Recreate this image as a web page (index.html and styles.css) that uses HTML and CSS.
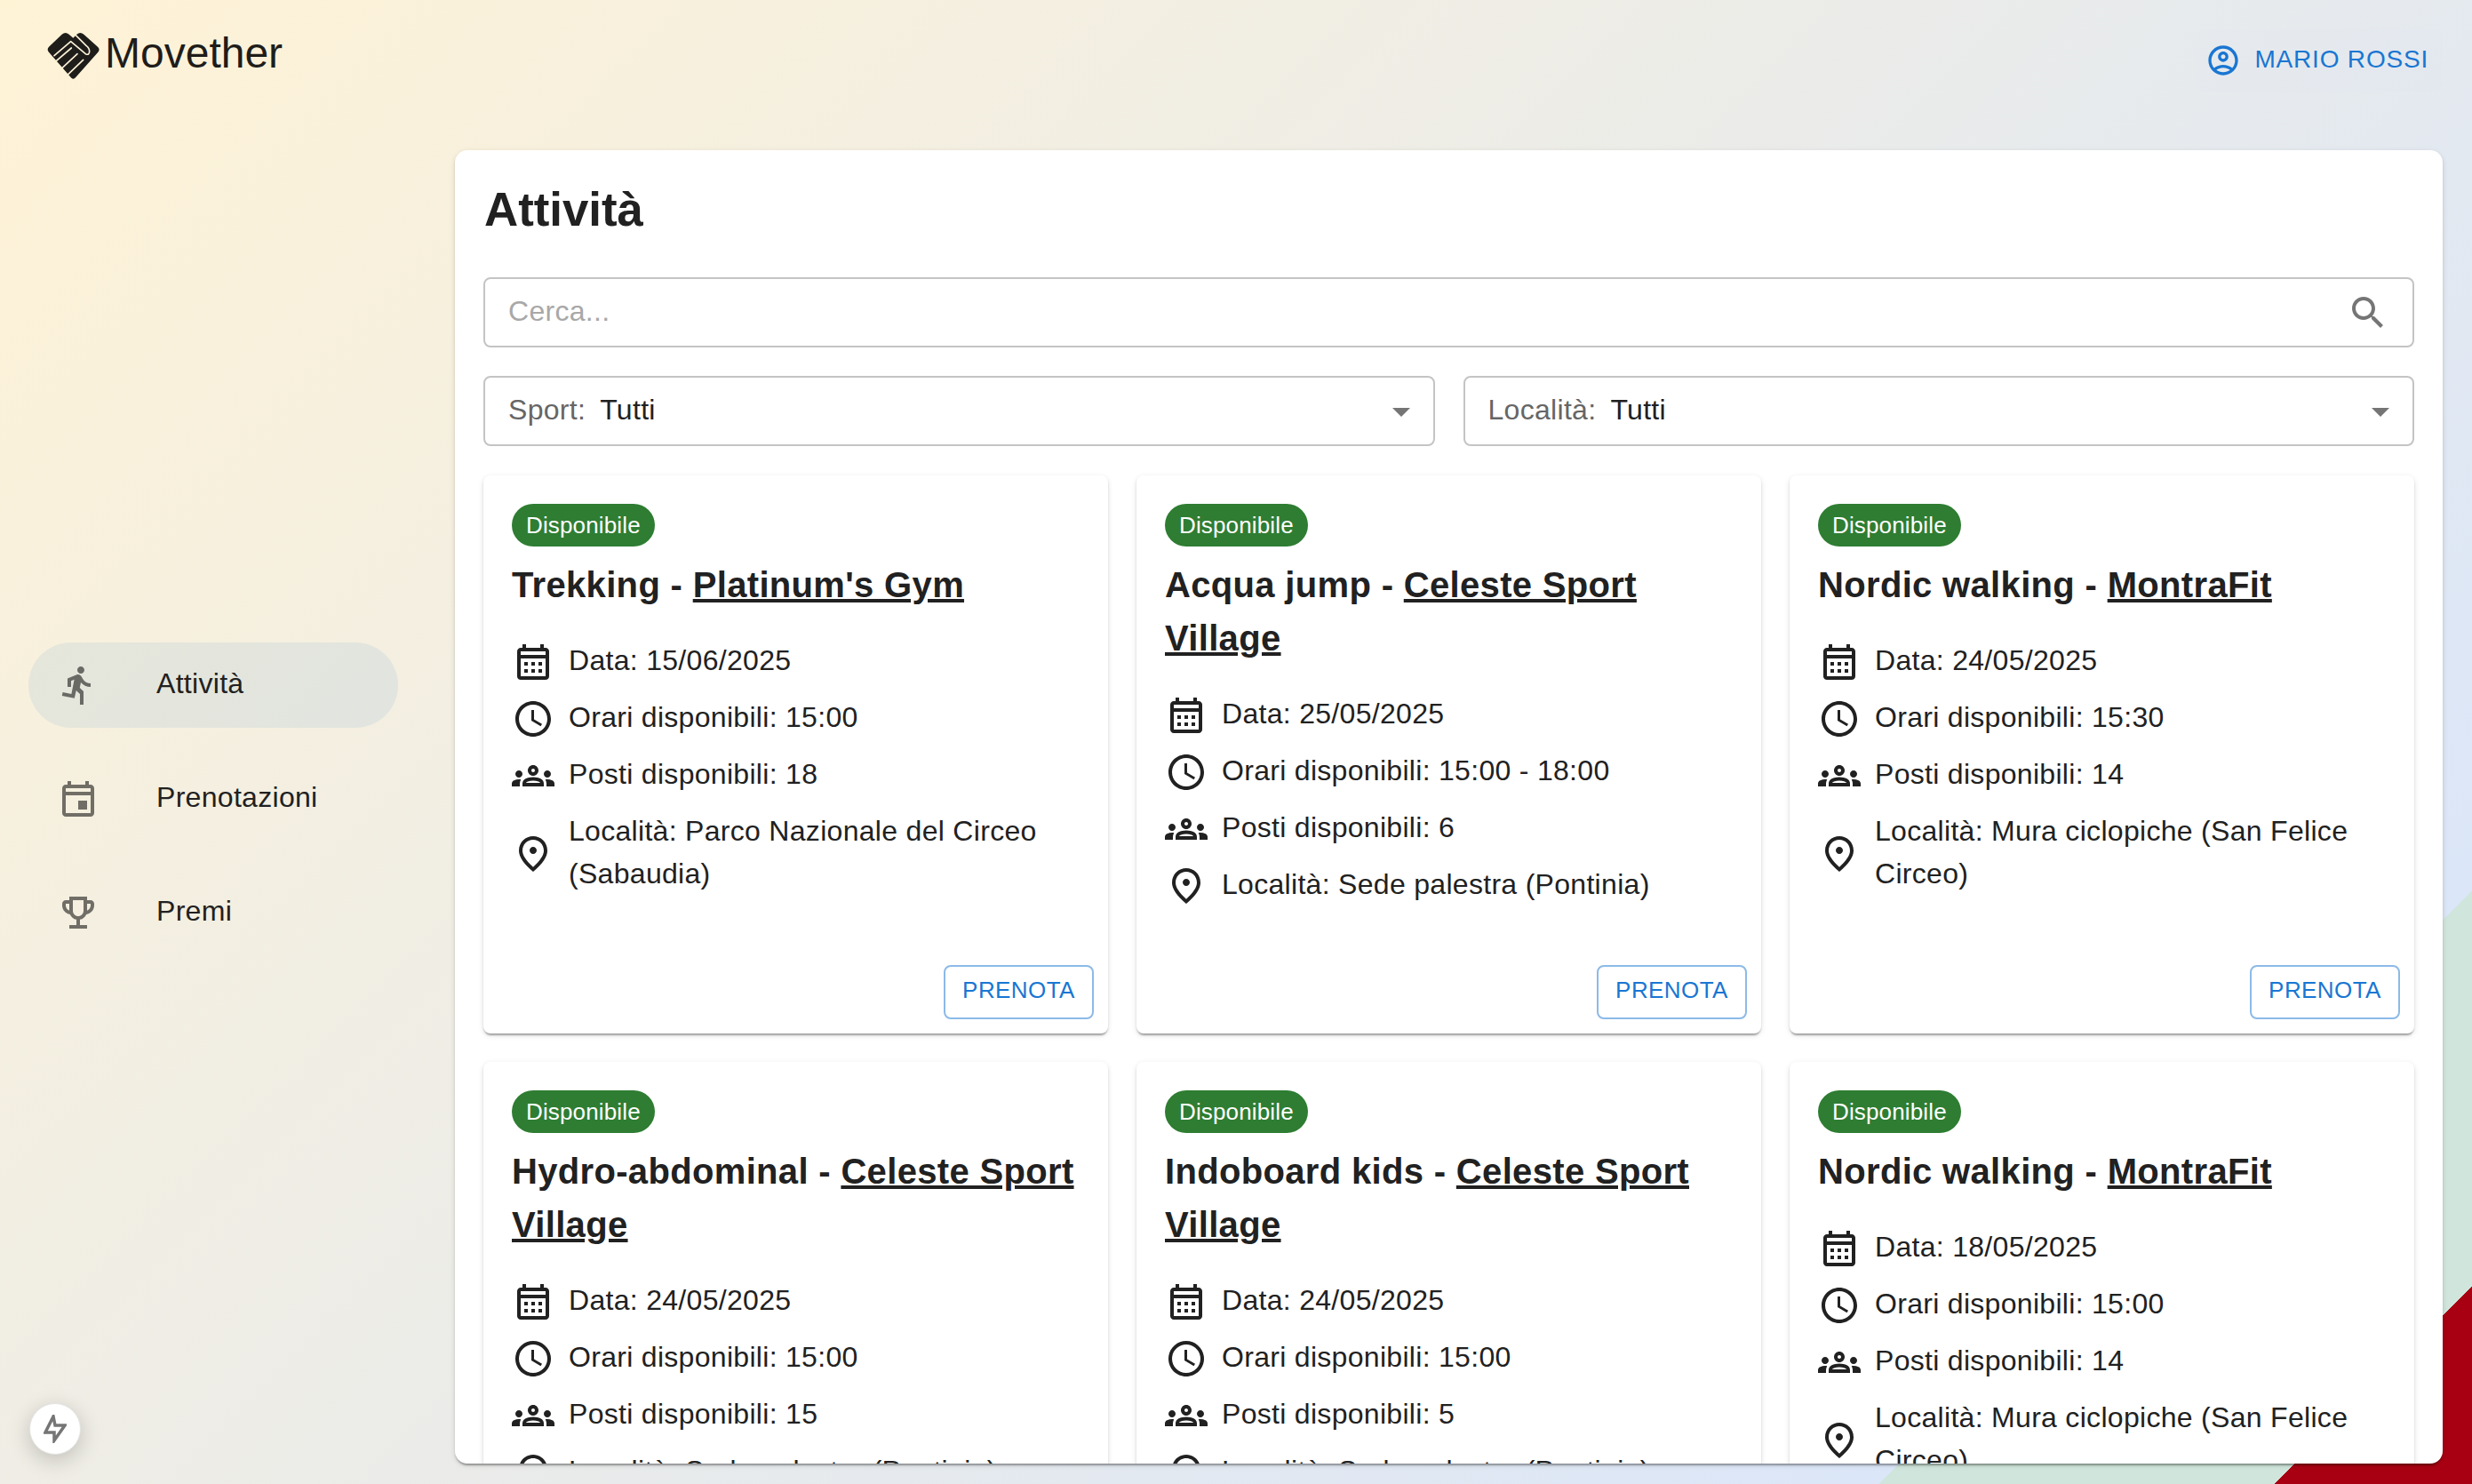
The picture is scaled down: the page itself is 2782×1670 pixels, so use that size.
FILE: index.html
```html
<!DOCTYPE html>
<html lang="it">
<head>
    <meta charset="UTF-8">
    <meta name="viewport" content="width=device-width, initial-scale=1.0">
    <title>Movether</title>
    <link rel="stylesheet" href="styles.css">
</head>

<body>
    <svg class="sprite" xmlns="http://www.w3.org/2000/svg">
        <symbol id="ic-calendar" viewBox="0 0 24 24"><path d="M19 4h-1V2h-2v2H8V2H6v2H5c-1.1 0-2 .9-2 2v14c0 1.1.9 2 2 2h14c1.1 0 2-.9 2-2V6c0-1.1-.9-2-2-2zm0 16H5V10h14v10zm0-12H5V6h14v2zM9 14H7v-2h2v2zm4 0h-2v-2h2v2zm4 0h-2v-2h2v2zm-8 4H7v-2h2v2zm4 0h-2v-2h2v2zm4 0h-2v-2h2v2z"/></symbol>
        <symbol id="ic-clock" viewBox="0 0 24 24"><path d="M11.99 2C6.47 2 2 6.48 2 12s4.47 10 9.99 10C17.52 22 22 17.52 22 12S17.52 2 11.99 2zM12 20c-4.42 0-8-3.58-8-8s3.58-8 8-8 8 3.58 8 8-3.58 8-8 8zm.5-13H11v6l5.25 3.15.75-1.23-4.5-2.67z"/></symbol>
        <symbol id="ic-groups" viewBox="0 0 24 24"><path d="M4 13c1.1 0 2-.9 2-2 0-1.1-.9-2-2-2s-2 .9-2 2c0 1.1.9 2 2 2zm1.13 1.1c-.37-.06-.74-.1-1.13-.1-.99 0-1.93.21-2.78.58C.48 14.9 0 15.62 0 16.43V18h4.5v-1.61c0-.83.23-1.61.63-2.29zM20 13c1.1 0 2-.9 2-2 0-1.1-.9-2-2-2s-2 .9-2 2c0 1.1.9 2 2 2zm4 3.43c0-.81-.48-1.53-1.22-1.85-.85-.37-1.79-.58-2.78-.58-.39 0-.76.04-1.13.1.4.68.63 1.46.63 2.29V18H24v-1.57zm-7.76-2.78C15.07 13.13 13.62 12.75 12 12.75c-1.62 0-3.07.39-4.24.9C6.68 14.13 6 15.21 6 16.39V18h12v-1.61c0-1.18-.68-2.26-1.76-2.74zM8.07 16c.09-.23.13-.39.91-.69.97-.38 1.99-.56 3.02-.56s2.05.18 3.02.56c.77.3.81.46.91.69H8.07zM12 8c.55 0 1 .45 1 1s-.45 1-1 1-1-.45-1-1 .45-1 1-1m0-2c-1.66 0-3 1.34-3 3s1.34 3 3 3 3-1.34 3-3-1.34-3-3-3z"/></symbol>
        <symbol id="ic-place" viewBox="0 0 24 24"><path d="M12 12c-1.1 0-2-.9-2-2s.9-2 2-2 2 .9 2 2-.9 2-2 2zm6-1.8C18 6.57 15.35 4 12 4s-6 2.57-6 6.2c0 2.34 1.95 5.44 6 9.14 4.05-3.7 6-6.8 6-9.14zM12 2c4.2 0 8 3.22 8 8.2 0 3.32-2.67 7.25-8 11.8-5.33-4.55-8-8.48-8-11.8C4 5.22 7.8 2 12 2z"/></symbol>
        <symbol id="ic-arrow" viewBox="0 0 24 24"><path d="M7 10l5 5 5-5z"/></symbol>
    </svg>

    <header class="topbar">
        <a class="brand" href="#">
            <svg class="brand-logo" viewBox="40 22 180 165">
                <path class="logo-base" d="M46 72 L90 30 Q102 20 114 30 L128 42 L140 30 Q152 20 164 30 L211 72 Q220 81 212 90 L136 176 Q129 184 122 177 L46 90 Q38 81 46 72 Z"/>
                <path class="logo-cut" d="M64 102 L120 54 L170 96 Q182 102 183 88 Q183 76 172 68 L136 32"/>
                <path class="logo-cut" d="M68 122 L122 76"/>
                <path class="logo-cut" d="M88 146 L142 96"/>
                <path class="logo-cut" d="M108 168 L162 116"/>
            </svg>
            <span class="brand-name">Movether</span>
        </a>
        <button type="button" class="user-btn">
            <svg class="user-icon" viewBox="0 0 24 24"><path d="M12 2C6.48 2 2 6.48 2 12s4.48 10 10 10 10-4.48 10-10S17.52 2 12 2zM7.35 18.5C8.66 17.56 10.26 17 12 17s3.34.56 4.65 1.5c-1.31.94-2.91 1.5-4.65 1.5s-3.34-.56-4.65-1.5zm10.79-1.38C16.45 15.8 14.32 15 12 15s-4.45.8-6.14 2.12C4.7 15.73 4 13.95 4 12c0-4.42 3.58-8 8-8s8 3.58 8 8c0 1.95-.7 3.73-1.86 5.12zM12 6c-1.93 0-3.5 1.57-3.5 3.5S10.07 13 12 13s3.5-1.57 3.5-3.5S13.93 6 12 6zm0 5c-.83 0-1.5-.67-1.5-1.5S11.17 8 12 8s1.5.67 1.5 1.5S12.83 11 12 11z"/></svg>
            <span class="user-name">Mario Rossi</span>
        </button>
    </header>

    <div class="layout">
        <nav class="sidebar">
            <a class="nav-item nav-active" href="#">
                <svg class="nav-icon" viewBox="0 0 24 24"><path d="M13.49 5.48c1.1 0 2-.9 2-2s-.9-2-2-2-2 .9-2 2 .9 2 2 2zm-3.6 13.9l1-4.4 2.1 2v6h2v-7.5l-2.1-2 .6-3c1.3 1.5 3.3 2.5 5.5 2.5v-2c-1.9 0-3.5-1-4.3-2.4l-1-1.6c-.4-.6-1-1-1.7-1-.3 0-.5.1-.8.1l-5.2 2.2v4.7h2v-3.4l1.8-.7-1.6 8.1-4.9-1-.4 2 7 1.4z"/></svg>
                <span class="nav-label">Attività</span>
            </a>
            <a class="nav-item" href="#">
                <svg class="nav-icon" viewBox="0 0 24 24"><path d="M19 4h-1V2h-2v2H8V2H6v2H5c-1.11 0-1.99.9-1.99 2L3 20c0 1.1.89 2 2 2h14c1.1 0 2-.9 2-2V6c0-1.1-.9-2-2-2zm0 16H5V10h14v10zm0-12H5V6h14v2zm-2 5h-5v5h5v-5z"/></svg>
                <span class="nav-label">Prenotazioni</span>
            </a>
            <a class="nav-item" href="#">
                <svg class="nav-icon" viewBox="0 0 24 24"><path d="M19 5h-2V3H7v2H5c-1.1 0-2 .9-2 2v1c0 2.55 1.92 4.63 4.39 4.94.63 1.5 1.98 2.63 3.61 2.96V19H7v2h10v-2h-4v-3.1c1.63-.33 2.98-1.46 3.61-2.96C19.08 12.63 21 10.55 21 8V7c0-1.1-.9-2-2-2zM5 8V7h2v3.82C5.84 10.4 5 9.3 5 8zm7 6c-1.65 0-3-1.35-3-3V5h6v6c0 1.65-1.35 3-3 3zm7-6c0 1.3-.84 2.4-2 2.82V7h2v1z"/></svg>
                <span class="nav-label">Premi</span>
            </a>
        </nav>

        <main class="panel">
            <h1 class="panel-title">Attività</h1>

            <div class="search">
                <input type="text" class="search-input" placeholder="Cerca..." autocomplete="off">
                <svg class="search-icon" viewBox="0 0 24 24"><path d="M15.5 14h-.79l-.28-.27C15.41 12.59 16 11.11 16 9.5 16 5.91 13.09 3 9.5 3S3 5.91 3 9.5 5.91 16 9.5 16c1.61 0 3.09-.59 4.23-1.57l.27.28v.79l5 4.99L20.49 19l-4.99-5zm-6 0C7.01 14 5 11.99 5 9.5S7.01 5 9.5 5 14 7.01 14 9.5 11.99 14 9.5 14z"/></svg>
            </div>

            <div class="filters">
                <div class="select">
                    <span class="select-label">Sport:</span>
                    <span class="select-value">Tutti</span>
                    <svg class="select-arrow"><use href="#ic-arrow"/></svg>
                </div>
                <div class="select">
                    <span class="select-label">Località:</span>
                    <span class="select-value">Tutti</span>
                    <svg class="select-arrow"><use href="#ic-arrow"/></svg>
                </div>
            </div>

            <div class="cards">
                <article class="card">
                    <span class="chip">Disponibile</span>
                    <h2 class="card-title">Trekking - <a href="#">Platinum's Gym</a></h2>
                    <ul class="details">
                        <li><svg class="detail-icon"><use href="#ic-calendar"/></svg><span class="detail-text">Data: 15/06/2025</span></li>
                        <li><svg class="detail-icon"><use href="#ic-clock"/></svg><span class="detail-text">Orari disponibili: 15:00</span></li>
                        <li><svg class="detail-icon"><use href="#ic-groups"/></svg><span class="detail-text">Posti disponibili: 18</span></li>
                        <li><svg class="detail-icon"><use href="#ic-place"/></svg><span class="detail-text">Località: Parco Nazionale del Circeo (Sabaudia)</span></li>
                    </ul>
                    <div class="card-actions"><button type="button" class="book-btn">Prenota</button></div>
                </article>

                <article class="card">
                    <span class="chip">Disponibile</span>
                    <h2 class="card-title">Acqua jump - <a href="#">Celeste Sport Village</a></h2>
                    <ul class="details">
                        <li><svg class="detail-icon"><use href="#ic-calendar"/></svg><span class="detail-text">Data: 25/05/2025</span></li>
                        <li><svg class="detail-icon"><use href="#ic-clock"/></svg><span class="detail-text">Orari disponibili: 15:00 - 18:00</span></li>
                        <li><svg class="detail-icon"><use href="#ic-groups"/></svg><span class="detail-text">Posti disponibili: 6</span></li>
                        <li><svg class="detail-icon"><use href="#ic-place"/></svg><span class="detail-text">Località: Sede palestra (Pontinia)</span></li>
                    </ul>
                    <div class="card-actions"><button type="button" class="book-btn">Prenota</button></div>
                </article>

                <article class="card">
                    <span class="chip">Disponibile</span>
                    <h2 class="card-title">Nordic walking - <a href="#">MontraFit</a></h2>
                    <ul class="details">
                        <li><svg class="detail-icon"><use href="#ic-calendar"/></svg><span class="detail-text">Data: 24/05/2025</span></li>
                        <li><svg class="detail-icon"><use href="#ic-clock"/></svg><span class="detail-text">Orari disponibili: 15:30</span></li>
                        <li><svg class="detail-icon"><use href="#ic-groups"/></svg><span class="detail-text">Posti disponibili: 14</span></li>
                        <li><svg class="detail-icon"><use href="#ic-place"/></svg><span class="detail-text">Località: Mura ciclopiche (San Felice Circeo)</span></li>
                    </ul>
                    <div class="card-actions"><button type="button" class="book-btn">Prenota</button></div>
                </article>

                <article class="card">
                    <span class="chip">Disponibile</span>
                    <h2 class="card-title">Hydro-abdominal - <a href="#">Celeste Sport Village</a></h2>
                    <ul class="details">
                        <li><svg class="detail-icon"><use href="#ic-calendar"/></svg><span class="detail-text">Data: 24/05/2025</span></li>
                        <li><svg class="detail-icon"><use href="#ic-clock"/></svg><span class="detail-text">Orari disponibili: 15:00</span></li>
                        <li><svg class="detail-icon"><use href="#ic-groups"/></svg><span class="detail-text">Posti disponibili: 15</span></li>
                        <li><svg class="detail-icon"><use href="#ic-place"/></svg><span class="detail-text">Località: Sede palestra (Pontinia)</span></li>
                    </ul>
                    <div class="card-actions"><button type="button" class="book-btn">Prenota</button></div>
                </article>

                <article class="card">
                    <span class="chip">Disponibile</span>
                    <h2 class="card-title">Indoboard kids - <a href="#">Celeste Sport Village</a></h2>
                    <ul class="details">
                        <li><svg class="detail-icon"><use href="#ic-calendar"/></svg><span class="detail-text">Data: 24/05/2025</span></li>
                        <li><svg class="detail-icon"><use href="#ic-clock"/></svg><span class="detail-text">Orari disponibili: 15:00</span></li>
                        <li><svg class="detail-icon"><use href="#ic-groups"/></svg><span class="detail-text">Posti disponibili: 5</span></li>
                        <li><svg class="detail-icon"><use href="#ic-place"/></svg><span class="detail-text">Località: Sede palestra (Pontinia)</span></li>
                    </ul>
                    <div class="card-actions"><button type="button" class="book-btn">Prenota</button></div>
                </article>

                <article class="card">
                    <span class="chip">Disponibile</span>
                    <h2 class="card-title">Nordic walking - <a href="#">MontraFit</a></h2>
                    <ul class="details">
                        <li><svg class="detail-icon"><use href="#ic-calendar"/></svg><span class="detail-text">Data: 18/05/2025</span></li>
                        <li><svg class="detail-icon"><use href="#ic-clock"/></svg><span class="detail-text">Orari disponibili: 15:00</span></li>
                        <li><svg class="detail-icon"><use href="#ic-groups"/></svg><span class="detail-text">Posti disponibili: 14</span></li>
                        <li><svg class="detail-icon"><use href="#ic-place"/></svg><span class="detail-text">Località: Mura ciclopiche (San Felice Circeo)</span></li>
                    </ul>
                    <div class="card-actions"><button type="button" class="book-btn">Prenota</button></div>
                </article>
            </div>
        </main>
    </div>

    <button type="button" class="bolt-btn" title="Bolt">
        <svg class="bolt-icon" viewBox="0 0 26 32"><path d="M11 2 L2 20 H12 L12 29 L24 12 H13 Z"/></svg>
    </button>
</body>
</html>
```

FILE: styles.css
```css
* {
    box-sizing: border-box;
    font-family: "Liberation Sans", Arial, sans-serif;
}
html, body {
    height: 100%;
}
body {
    display: flex;
    flex-direction: column;
    margin: 0;
    height: 1670px;
    overflow: hidden;
    color: #212121;
    font-size: 32px;
    line-height: 48px;
    letter-spacing: 0.3px;
    background: linear-gradient(135deg, #fff3d6 0%, #dbe6f8 85%, #d0e5db 85%, #d0e5db 95%, #a80012 95%);
}
a {
    color: inherit;
}
.sprite {
    display: none;
}

/* top bar */
.topbar {
    display: flex;
    flex-shrink: 0;
    justify-content: space-between;
    align-items: flex-start;
    height: 169px;
    padding: 33px 33px 0 53px;
}
.brand {
    display: flex;
    align-items: center;
    height: 53px;
    margin-top: 4px;
    text-decoration: none;
    color: #1e1d1a;
}
.brand-logo {
    width: 60px;
    height: 55px;
    margin-right: 5px;
}
.logo-base {
    fill: #1e1d1a;
}
.logo-cut {
    fill: none;
    stroke: #fdf1d8;
    stroke-width: 5;
    stroke-linecap: round;
    stroke-linejoin: round;
}
.brand-name {
    margin-bottom: 8px;
    font-size: 48px;
    line-height: 64px;
    letter-spacing: 0;
}
.user-btn {
    display: flex;
    align-items: center;
    height: 70px;
    padding: 0 16px 0 11px;
    border: none;
    border-radius: 8px;
    background-color: rgba(25, 118, 210, 0.004);
    color: #1976d2;
    font-size: 28px;
    letter-spacing: 0.8px;
    text-transform: uppercase;
}
.user-icon {
    width: 40px;
    height: 40px;
    margin-right: 16px;
    fill: #1976d2;
}
.user-name {
    margin-bottom: 2px;
}

/* main area */
.layout {
    display: flex;
    flex: 1;
    min-height: 0;
}
.sidebar {
    display: flex;
    flex-direction: column;
    flex-shrink: 0;
    justify-content: center;
    gap: 32px;
    width: 512px;
    padding: 0 64px 41px 32px;
}
.nav-item {
    display: flex;
    align-items: center;
    height: 96px;
    padding-left: 32px;
    border-radius: 48px;
    text-decoration: none;
}
.nav-active {
    background-color: rgba(25, 118, 210, 0.08);
}
.nav-icon {
    flex-shrink: 0;
    width: 48px;
    height: 48px;
    margin-right: 64px;
    fill: rgba(0, 0, 0, 0.54);
}
.nav-label {
    margin: -5px 0 0;
}
.panel {
    flex: 1;
    min-width: 0;
    margin: 0 33px 23px 0;
    padding: 32px 32px 0;
    overflow: hidden;
    border-radius: 14px;
    background-color: #fff;
    box-shadow: 0 4px 2px -2px rgba(0, 0, 0, 0.2), 0 2px 2px 0 rgba(0, 0, 0, 0.14), 0 2px 6px 0 rgba(0, 0, 0, 0.12);
}
.panel-title {
    margin: 0 0 41px 1px;
    font-size: 52.8px;
    font-weight: 700;
    line-height: 70px;
    letter-spacing: 0;
}

/* search and filters */
.search {
    display: flex;
    align-items: center;
    height: 79px;
    margin-bottom: 32px;
    padding: 0 26px;
    border: 2px solid #c4c4c4;
    border-radius: 8px;
}
.search-input {
    flex: 1;
    min-width: 0;
    margin-bottom: 3px;
    padding: 0;
    border: none;
    outline: none;
    color: #212121;
    font-size: 32px;
    letter-spacing: 0.3px;
}
.search-input::placeholder {
    color: #a8a8a8;
    opacity: 1;
}
.search-icon {
    width: 48px;
    height: 48px;
    fill: #757575;
}
.filters {
    display: grid;
    grid-template-columns: 1fr 1fr;
    gap: 32px;
    margin-bottom: 33px;
}
.select {
    display: flex;
    align-items: center;
    height: 79px;
    padding: 0 12px 0 26px;
    border: 2px solid #c4c4c4;
    border-radius: 8px;
}
.select-label {
    margin: 0 16px 3px 0;
    color: #666;
}
.select-value {
    flex: 1;
    margin-bottom: 3px;
}
.select-arrow {
    width: 48px;
    height: 48px;
    fill: #757575;
}

/* cards */
.cards {
    display: grid;
    grid-template-columns: repeat(3, 1fr);
    gap: 32px;
}
.card {
    display: flex;
    flex-direction: column;
    align-items: flex-start;
    height: 628px;
    padding-top: 32px;
    border-radius: 8px;
    background-color: #fff;
    box-shadow: 0 4px 2px -2px rgba(0, 0, 0, 0.2), 0 2px 2px 0 rgba(0, 0, 0, 0.14), 0 2px 6px 0 rgba(0, 0, 0, 0.12);
}
.chip {
    display: flex;
    align-items: center;
    height: 48px;
    margin: 0 32px 13px;
    padding: 0 16px 1px;
    border-radius: 24px;
    background-color: #2e7d32;
    color: #fff;
    font-size: 26px;
    letter-spacing: 0.15px;
}
.card-title {
    margin: 0 32px 33px;
    font-size: 40px;
    font-weight: 700;
    line-height: 60px;
    letter-spacing: 0.33px;
}
.details {
    display: flex;
    flex-direction: column;
    gap: 16px;
    margin: 0;
    padding: 0 32px;
    list-style: none;
}
.details li {
    display: flex;
    align-items: center;
    gap: 16px;
}
.detail-icon {
    flex-shrink: 0;
    width: 48px;
    height: 48px;
    fill: #212121;
}
.detail-text {
    margin: -2px 0 2px;
}
.card-actions {
    display: flex;
    justify-content: flex-end;
    align-self: stretch;
    margin-top: auto;
    padding: 16px;
}
.book-btn {
    width: 169px;
    height: 61px;
    padding: 0 0 4px;
    border: 2px solid rgba(25, 118, 210, 0.5);
    border-radius: 8px;
    background: none;
    color: #1976d2;
    font-size: 26px;
    letter-spacing: 0.43px;
    text-transform: uppercase;
}

/* floating button */
.bolt-btn {
    position: absolute;
    left: 33px;
    top: 1579px;
    display: flex;
    justify-content: center;
    align-items: center;
    width: 58px;
    height: 58px;
    padding: 0;
    border: 1px solid #e4e4e2;
    border-radius: 50%;
    background-color: #fff;
    box-shadow: 0 6px 24px rgba(0, 0, 0, 0.2);
}
.bolt-icon {
    width: 26px;
    height: 32px;
    fill: none;
    stroke: #757575;
    stroke-width: 3.5;
}
```
